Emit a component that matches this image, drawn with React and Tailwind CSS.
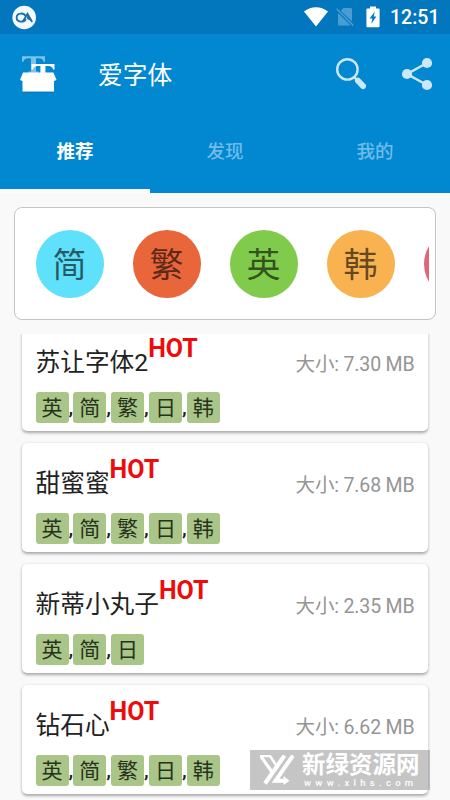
import React, { useState } from 'react';

const LANGS = [
  { name: '简', color: 'bg-[#5fe0fb]' },
  { name: '繁', color: 'bg-[#e9663b]' },
  { name: '英', color: 'bg-[#80cb4b]' },
  { name: '韩', color: 'bg-[#f9b250]' },
  { name: '日', color: 'bg-[#e0677a]' },
];

const FONTS = [
  { name: '苏让字体2', size: '7.30', tags: ['英', '简', '繁', '日', '韩'] },
  { name: '甜蜜蜜', size: '7.68', tags: ['英', '简', '繁', '日', '韩'] },
  { name: '新蒂小丸子', size: '2.35', tags: ['英', '简', '日'] },
  { name: '钻石心', size: '6.62', tags: ['英', '简', '繁', '日', '韩'] },
];

const TABS = ['推荐', '发现', '我的'];

function StatusBar() {
  return (
    <div className="h-[34px] shrink-0 bg-[#0277bd] flex items-center justify-between pl-[12px] pr-[12px] text-white">
      <svg width="25" height="25" viewBox="0 0 25 25" fill="none">
        <circle cx="12.2" cy="12.5" r="11.8" fill="#f4fbff" />
        <path d="M14 14.2 C12 17.6 4.6 17.8 4.6 12.6 C4.6 7.6 11.8 7.4 13.6 11" stroke="#1b6fa8" strokeWidth="1.8" />
        <path d="M11.2 16 L15.5 8.8 L19.8 16.2" stroke="#1b6fa8" strokeWidth="1.9" strokeLinecap="round" />
        <path d="M15.5 9.5 L20 16.6 L14.8 13.8 Z" fill="#1b6fa8" />
      </svg>
      <div className="flex items-center">
        <svg width="24" height="20" viewBox="0 0 24 20" className="mr-[8px]">
          <path d="M0 4.6 C7 -1.2 17 -1.2 24 4.6 L12 19.6 Z" fill="#fff" />
        </svg>
        <svg width="18" height="20" viewBox="0 0 18 20" className="mr-[12px]">
          <path d="M7.5 1 H15 Q16 1 16 2 V14.6 L4.8 3.7 Z" fill="#4a9dd2" />
          <path d="M2 6 L14.8 18.5 H3 Q2 18.5 2 17.5 Z" fill="#4a9dd2" />
          <path d="M0.6 1.8 L17.2 18.4" stroke="#4a9dd2" strokeWidth="1.5" />
        </svg>
        <svg width="14" height="22" viewBox="0 0 14 22" className="mr-[10px]">
          <path d="M4 0.5 H10 V2.5 H12.5 Q13.6 2.5 13.6 3.6 V20 Q13.6 21.2 12.5 21.2 H1.5 Q0.4 21.2 0.4 20 V3.6 Q0.4 2.5 1.5 2.5 H4 Z" fill="#fff" />
          <path d="M8.8 5.5 L3.6 12.6 H6.4 L5.4 17.8 L10.4 10.5 H7.7 Z" fill="#0277bd" />
        </svg>
        <span className="relative top-[1px] w-[48px] text-[19.5px] leading-[34px] font-medium whitespace-nowrap">12:51</span>
      </div>
    </div>
  );
}

function Toolbar() {
  return (
    <div className="h-[79px] flex items-center pl-[20px] pr-[17px]">
      <svg width="38" height="40" viewBox="0 0 38 40">
        <path d="M2 2.3 H25 V7.8 H23.6 Q23 4.2 19 4.2 H16 V17.5 H18.5 V19 H8.5 V17.5 H11 V4.2 H8 Q4 4.2 3.4 7.8 H2 Z" fill="#7fc1e8" />
        <path d="M11.5 10 H34.5 V15.6 H33.1 Q32.5 12 28.5 12 H25.4 V20 H20.4 V12 H17.5 Q13.5 12 12.9 15.6 H11.5 Z" fill="#fff" />
        <path d="M3 18.6 H33.4 L36.6 26 L34 27 V37.8 H2.5 V27 L0 26 Z" fill="#fff" />
        <path d="M2.5 38.2 H34" stroke="#056fae" strokeWidth="0.8" />
      </svg>
      <h1 className="relative top-[2px] ml-[40px] text-[24.7px] leading-[34px] text-white">爱字体</h1>
      <div className="ml-auto flex items-center gap-[34px]">
        <svg width="33" height="34" viewBox="0 0 33 34" fill="none" className="relative left-[1px]">
          <circle cx="12.4" cy="12.4" r="10.2" stroke="#cce7f8" strokeWidth="2.4" />
          <path d="M19 20 L22 23" stroke="#cce7f8" strokeWidth="2.4" />
          <path d="M23 23.7 L28 29" stroke="#cce7f8" strokeWidth="6" strokeLinecap="round" />
        </svg>
        <svg width="32" height="34" viewBox="0 0 32 34">
          <path d="M26 6 L6 17 L26 28" stroke="#cce7f8" strokeWidth="2.5" fill="none" />
          <circle cx="26" cy="6" r="5.1" fill="#cce7f8" />
          <circle cx="6" cy="17" r="5.1" fill="#cce7f8" />
          <circle cx="26" cy="28" r="5.1" fill="#cce7f8" />
        </svg>
      </div>
    </div>
  );
}

function FontCard({ font }) {
  return (
    <div className="h-[109px] shrink-0 bg-white rounded-[5px] px-[13.5px] shadow-[0_1.5px_3px_rgba(0,0,0,0.32)]">
      <div className="h-[70px] pt-[23px] flex items-baseline">
        <span className="text-[24.7px] leading-[36px] text-[#222]">{font.name}</span>
        <span className="relative -top-[14px] text-[25px] leading-[36px] font-bold text-[#ee0b0b]">HOT</span>
        <span className="ml-auto text-[19.5px] leading-[36px] tracking-[-0.15px] text-[#959595]">大小: {font.size} MB</span>
      </div>
      <div className="flex">
        {font.tags.map((tag, i) => (
          <React.Fragment key={tag}>
            {i > 0 && <span className="w-[4.8px] text-[21px] leading-[31px] font-medium text-[#222]">,</span>}
            <span className="w-[33px] h-[31px] pt-[1px] rounded-[3px] bg-[#aac588] text-center text-[21px] leading-[31px] text-[#26331c]">
              {tag}
            </span>
          </React.Fragment>
        ))}
      </div>
    </div>
  );
}

function Watermark() {
  return (
    <div className="absolute left-[250px] top-[750px] w-[180px] h-[40px] bg-[#8c8c8c]/50 flex items-center pl-[10px] text-white">
      <svg width="35" height="30" viewBox="0 0 35 30" fill="none" stroke="#fff">
        <path d="M0 1 H10 L18 13" strokeWidth="2.6" />
        <path d="M1 1.5 L12 17" strokeWidth="3.2" />
        <path d="M24.5 0.5 L5 28.5" strokeWidth="4.2" />
        <path d="M33 0.5 L15.5 25.8 H27" strokeWidth="4" />
        <path d="M23.5 21 L29.5 25.8 L23.5 30 Z" fill="#fff" stroke="none" />
      </svg>
      <div className="ml-[7px] pt-[1px]">
        <div className="text-[23.5px] leading-[24px] font-bold">新绿资源网</div>
        <div className="pl-[2px] text-[9.5px] leading-[12px] font-medium tracking-[4.3px] whitespace-nowrap">www.xlhs.com</div>
      </div>
    </div>
  );
}

export default function App() {
  const [tab, setTab] = useState(0);

  return (
    <div className="relative w-[450px] h-[800px] overflow-hidden flex flex-col bg-[#f9f9f9] font-[Roboto,'Noto_Sans_CJK_SC',sans-serif]">
      <StatusBar />
      <header className="h-[159px] shrink-0 bg-[#0288d1]">
        <Toolbar />
        <div className="h-[80px] flex">
          {TABS.map((name, i) => (
            <button
              key={name}
              onClick={() => setTab(i)}
              className={`w-[150px] pt-[4px] border-b-[4px] text-[18.5px] ${
                tab === i ? 'text-white font-bold border-[#f9fdff]' : 'text-[#71bbea] font-medium border-transparent'
              }`}
            >
              {name}
            </button>
          ))}
        </div>
      </header>

      <div className="mt-[14px] mx-[14px] h-[113px] shrink-0 rounded-[8px] border border-[#c4c4c4] bg-white pl-[20.5px] pr-[6px] flex items-center">
        <div className="flex gap-[29px] overflow-hidden">
          {LANGS.map((lang) => (
            <div
              key={lang.name}
              className={`w-[68px] h-[68px] pt-[3px] shrink-0 rounded-full flex items-center justify-center text-[34px] leading-none text-black/60 ${lang.color}`}
            >
              {lang.name}
            </div>
          ))}
        </div>
      </div>

      <div className="mt-[14px] flex-1 min-h-0 overflow-hidden px-[22px]">
        <div className="-mt-[12px] flex flex-col gap-[12px]">
          {FONTS.map((font) => (
            <FontCard key={font.name} font={font} />
          ))}
        </div>
      </div>

      <Watermark />
    </div>
  );
}
